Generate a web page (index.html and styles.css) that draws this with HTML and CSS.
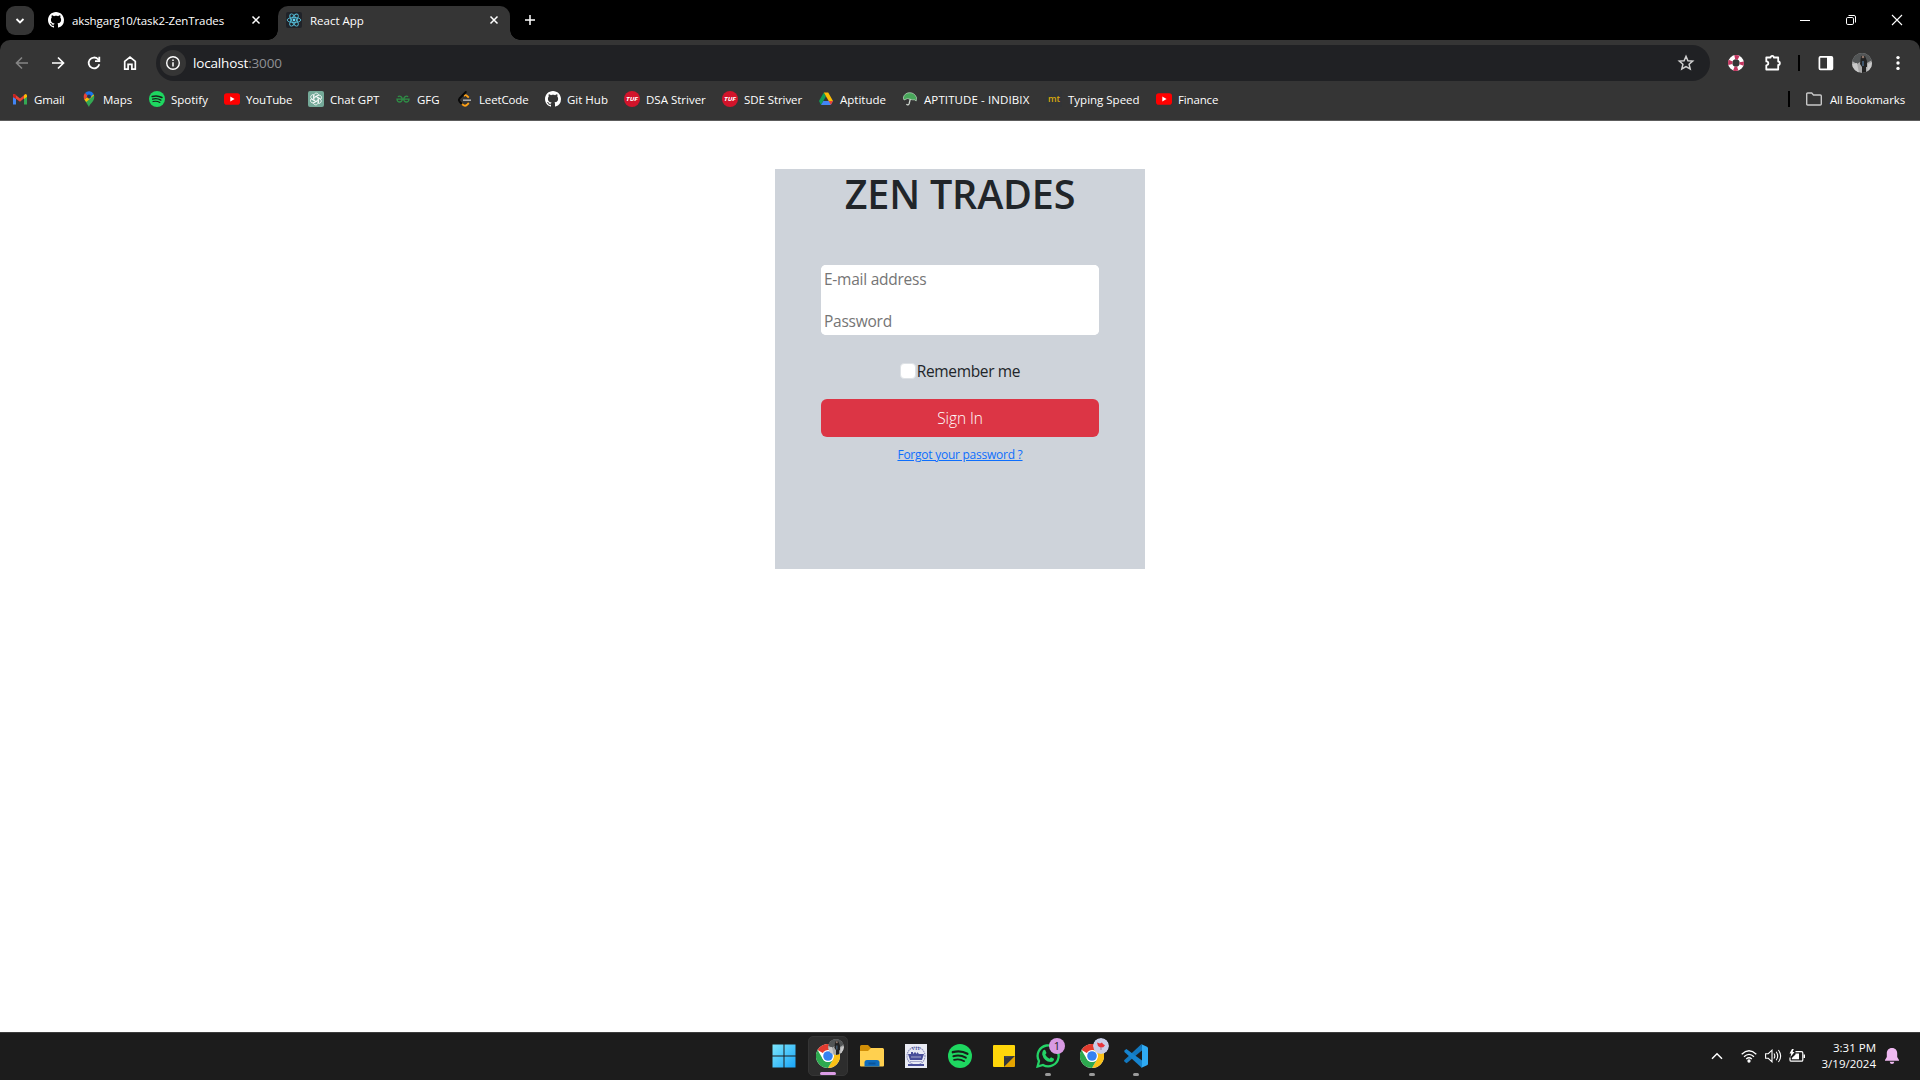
FILE: index.html
```html
<!DOCTYPE html>
<html lang="en">
<head>
<meta charset="utf-8">
<title>React App</title>
<link rel="stylesheet" href="styles.css">
</head>
<body>
<svg class="defs" width="0" height="0" aria-hidden="true">
  <symbol id="github" viewBox="0 0 16 16"><path fill="#fff" d="M8 0C3.58 0 0 3.58 0 8c0 3.54 2.29 6.53 5.47 7.59.4.07.55-.17.55-.38 0-.19-.01-.82-.01-1.49-2.01.37-2.53-.49-2.69-.94-.09-.23-.48-.94-.82-1.13-.28-.15-.68-.52-.01-.53.63-.01 1.08.58 1.23.82.72 1.21 1.87.87 2.33.66.07-.52.28-.87.51-1.07-1.78-.2-3.64-.89-3.64-3.95 0-.87.31-1.59.82-2.15-.08-.2-.36-1.02.08-2.12 0 0 .67-.21 2.2.82.64-.18 1.32-.27 2-.27s1.36.09 2 .27c1.53-1.04 2.2-.82 2.2-.82.44 1.1.16 1.92.08 2.12.51.56.82 1.27.82 2.15 0 3.07-1.87 3.75-3.65 3.95.29.25.54.73.54 1.48 0 1.07-.01 1.93-.01 2.2 0 .21.15.46.55.38A8.01 8.01 0 0 0 16 8c0-4.42-3.58-8-8-8z"/></symbol>
  <symbol id="spotify" viewBox="0 0 24 24"><circle cx="12" cy="12" r="12" fill="#1ed760"/><g fill="none" stroke="#17201a" stroke-linecap="round"><path stroke-width="2.3" d="M4.800 8.200c5-1.400 10.300-.9 14.600 1.600"/><path stroke-width="2" d="M5.400 12.200c4.300-1.200 8.700-.700 12.400 1.500"/><path stroke-width="1.600" d="M6 15.900c3.600-.9 7.200-.5 10.300 1.300"/></g></symbol>
  <symbol id="youtube" viewBox="0 0 16 16"><rect y="2.300" width="16" height="11.400" rx="2.800" fill="#f00"/><path fill="#fff" d="M6.300 5.500v5L10.600 8z"/></symbol>
  <symbol id="chrome" viewBox="0 0 24 24"><circle cx="12" cy="12" r="12" fill="#fff"/><path fill="#e33b2e" d="M12 12 1.600 6A12 12 0 0 1 22.400 6H12z"/><path fill="#fbc116" d="M12 6h10.400A12 12 0 0 1 12 24l5.200-9z"/><path fill="#2da94f" d="M1.600 6 6.800 15a6 6 0 0 0 10.400 0L12 24A12 12 0 0 1 1.600 6z"/><circle cx="12" cy="12" r="6" fill="#fff"/><circle cx="12" cy="12" r="4.800" fill="#3582f0"/></symbol>
  <symbol id="photo" viewBox="0 0 20 20"><clipPath id="round"><circle cx="10" cy="10" r="10"/></clipPath><g clip-path="url(#round)"><path fill="#a9a9a9" d="M0 0h20v20H0z"/><path fill="#525556" d="M0 0h20v7l-5 3-2-3-5 2-3 2-5-3z"/><path fill="#222" d="M9 3h4l2 5v6h-1v6h-4v-6L8 11z"/><path fill="#c9c9c9" d="M0 11l5-1 2 10H0zM16 11l4-2v11h-5z"/><circle cx="11" cy="4" r="1.300" fill="#8c7469"/><path fill="#40566b" d="M10 8h2v5h-2z"/></g></symbol>
  <symbol id="close" viewBox="0 0 10 10"><path d="m1.500 1.500 7 7m0-7-7 7" stroke="#fff" stroke-width="1.500"/></symbol>
</svg>

<header class="browser">
  <div class="tabstrip">
    <button class="tab-search"><svg width="10" height="10" viewBox="0 0 10 10"><path d="m1.500 3 3.500 3.500L8.500 3" fill="none" stroke="#fff" stroke-width="1.800"/></svg></button>
    <div class="tab"><svg width="16" height="16"><use href="#github"/></svg><span class="tab-title t-github">akshgarg10/task2-ZenTrades</span><svg width="10" height="10"><use href="#close"/></svg></div>
    <div class="tab active">
      <svg width="16" height="16" viewBox="0 0 16 16"><rect width="16" height="16" rx="2" fill="#202329"/><g fill="none" stroke="#55bdd8" stroke-width=".9"><ellipse cx="8" cy="8" rx="6.800" ry="2.600"/><ellipse cx="8" cy="8" rx="6.800" ry="2.600" transform="rotate(60 8 8)"/><ellipse cx="8" cy="8" rx="6.800" ry="2.600" transform="rotate(120 8 8)"/></g><circle cx="8" cy="8" r="1.400" fill="#61dafb"/></svg>
      <span class="tab-title">React App</span><svg width="10" height="10"><use href="#close"/></svg></div>
    <svg class="new-tab" width="12" height="12" viewBox="0 0 12 12"><path d="M6 1v10M1 6h10" stroke="#fff" stroke-width="1.500"/></svg>
    <div class="window-controls">
      <svg width="12" height="12" viewBox="0 0 12 12"><path d="M1 6.500h10" stroke="#fff"/></svg>
      <svg width="12" height="12" viewBox="0 0 12 12" fill="none" stroke="#fff"><rect x="1.500" y="3.500" width="7" height="7" rx="1.300"/><path d="M3.500 1.500H9A1.500 1.500 0 0 1 10.500 3v5.500"/></svg>
      <svg width="12" height="12" viewBox="0 0 12 12"><path d="m1 1 10 10M11 1 1 11" stroke="#fff" stroke-width="1.100"/></svg>
    </div>
  </div>
  <div class="chrome-panel">
    <div class="toolbar">
      <svg width="16" height="16" viewBox="0 0 16 16" fill="none" stroke="#858585" stroke-width="1.600"><path d="M14 8H3m5-5.500L2.500 8 8 13.500"/></svg>
      <svg width="16" height="16" viewBox="0 0 16 16" fill="none" stroke="#fff" stroke-width="1.700"><path d="M2 8h11M8 2.500 13.500 8 8 13.500"/></svg>
      <svg width="16" height="16" viewBox="0 0 16 16" fill="none" stroke="#fff" stroke-width="1.800"><path d="M13.300 9.300A5.400 5.400 0 1 1 12 4.200L13 5.300"/><path d="M13.300 1.800v4.300H9"/></svg>
      <svg width="16" height="16" viewBox="0 0 16 16" fill="none" stroke="#fff" stroke-width="1.700"><path d="M2.700 14.200V6.400L8 2l5.300 4.400v7.800h-3.400V9.400H6.100v4.800z"/></svg>
      <div class="omnibox">
        <span class="site-info"><svg width="16" height="16" viewBox="0 0 16 16"><circle cx="8" cy="8" r="6.300" fill="none" stroke="#fff" stroke-width="1.400"/><path d="M8 7.200v4.200M8 4.500v1.600" stroke="#fff" stroke-width="1.500"/></svg></span>
        <span class="url">localhost<span class="port">:3000</span></span>
        <svg width="18" height="18" viewBox="0 0 18 18"><path d="m9 2.300 1.900 4.400 4.800.4-3.600 3.200 1.100 4.700L9 12.500 4.800 15l1.100-4.700-3.600-3.200 4.800-.4z" fill="none" stroke="#d0d0d0" stroke-width="1.500"/></svg>
      </div>
      <div class="toolbar-end">
        <svg width="16" height="16" viewBox="0 0 16 16"><circle cx="8" cy="8" r="5.800" fill="none" stroke="#fff" stroke-width="4.300"/><circle cx="8" cy="8" r="5.800" fill="none" stroke="#c43660" stroke-width="4.300" stroke-dasharray="4 5.110" stroke-dashoffset="2"/></svg>
        <svg class="extensions" width="18" height="18" viewBox="0 0 18 18"><path d="M2.300 3.500h4.300a1.600 1.600 0 0 1 3.200 0h4.400v4a1.600 1.600 0 0 1 0 3.300v4.700H2.300v-4.200c2.700-.2 2.700-3.700 0-3.900z" fill="none" stroke="#fff" stroke-width="1.800" stroke-linejoin="round"/></svg>
        <i class="divider"></i>
        <svg class="side-panel" width="16" height="16" viewBox="0 0 16 16"><rect x="1.400" y="1.900" width="13" height="12.400" rx="1" fill="none" stroke="#fff" stroke-width="1.700"/><path d="M9 2h5.500v12H9z" fill="#fff"/></svg>
        <svg class="profile" width="20" height="20"><use href="#photo"/></svg>
        <svg width="4" height="16" viewBox="0 0 4 16" fill="#fff"><circle cx="2" cy="2.600" r="1.700"/><circle cx="2" cy="8" r="1.700"/><circle cx="2" cy="13.400" r="1.700"/></svg>
      </div>
    </div>
    <nav class="bookmarks">
      <a class="bm"><svg width="16" height="16" viewBox="0 0 16 16"><path fill="#4285f4" d="M1 6v7.500h3V7z"/><path fill="#34a853" d="M12 7v6.500h3V6z"/><path fill="#ea4335" d="M1 3.500 2.500 3 8 7.500 13.500 3v3L8 10.800 1 5.500z"/><path fill="#fbbc04" d="M12 4.200 13.500 3q1.500 0 1.500 1.500V6l-3 2z"/><path fill="#c5221f" d="M1 6V4.500Q1 3 2.500 3L4 4.200V8z"/></svg><span class="s-gmail">Gmail</span></a>
      <a class="bm"><svg width="16" height="16" viewBox="0 0 16 16"><path fill="#34a853" d="M3 8 8 16c1-3.500 5.300-5.300 5.300-10.200L12.700 3z"/><path fill="#fbbc04" d="m3.400 8.600 7-6.200 2.700 1.900L5.200 11z"/><path fill="#1a73e8" d="M4 2.100A5.300 5.300 0 0 1 12.600 3L8.500 7.800z"/><path fill="#ea4335" d="M4 2 7 5 3.400 8.800C2.300 6.200 2.500 3.800 4 2z"/><circle cx="8" cy="5.500" r="2" fill="#293650"/></svg><span>Maps</span></a>
      <a class="bm"><svg width="16" height="16"><use href="#spotify"/></svg><span>Spotify</span></a>
      <a class="bm"><svg width="16" height="16"><use href="#youtube"/></svg><span class="s-youtube">YouTube</span></a>
      <a class="bm"><svg width="16" height="16" viewBox="0 0 16 16"><rect width="16" height="16" rx="2" fill="#74a998"/><g fill="none" stroke="#fff" stroke-width=".8"><path id="petal" d="M6 8.800V4.500c0-3 4-3 4.500-.7L6.800 6"/><use href="#petal" transform="rotate(60 8 8)"/><use href="#petal" transform="rotate(120 8 8)"/><use href="#petal" transform="rotate(180 8 8)"/><use href="#petal" transform="rotate(240 8 8)"/><use href="#petal" transform="rotate(300 8 8)"/></g></svg><span>Chat GPT</span></a>
      <a class="bm"><svg width="16" height="16" viewBox="0 0 16 16" fill="none" stroke="#2f8d46" stroke-width="1.300"><path d="M2.800 5.700C5 4.500 7.200 5.700 7.200 8.300 7.200 11.900 2.300 11.900 2 8.200h12c-.3 3.700-5.200 3.700-5.200.1 0-2.600 2.200-3.800 4.400-2.600"/></svg><span>GFG</span></a>
      <a class="bm"><svg width="16" height="16" viewBox="0 0 16 16" fill="none" stroke-width="1.900"><path stroke="#ffa116" d="m6.800 4.800 1.200-.6q1-.3 1.800.5l2 1.900M4.500 12.400l1.200 1.200q2.200 2.200 4.300.2l1.800-1.800"/><path stroke="#090909" stroke-linecap="round" d="M8.800 1 2.500 7.500Q1.300 9 2.500 10.500l2 2"/><path stroke="#b3b3b3" stroke-width="1.500" d="M6 9.200h8"/></svg><span class="s-leet">LeetCode</span></a>
      <a class="bm"><svg width="16" height="16"><use href="#github"/></svg><span>Git Hub</span></a>
      <a class="bm"><svg width="16" height="16" viewBox="0 0 16 16"><circle cx="8" cy="8" r="8" fill="#d2142b"/><text x="8" y="9.800" text-anchor="middle" textLength="12" lengthAdjust="spacingAndGlyphs" class="tuf-text">TUF</text></svg><span>DSA Striver</span></a>
      <a class="bm"><svg width="16" height="16" viewBox="0 0 16 16"><circle cx="8" cy="8" r="8" fill="#d2142b"/><text x="8" y="9.800" text-anchor="middle" textLength="12" lengthAdjust="spacingAndGlyphs" class="tuf-text">TUF</text></svg><span class="s-sde">SDE Striver</span></a>
      <a class="bm"><svg width="16" height="16" viewBox="0 0 16 16"><path fill="#0f9d58" d="M5.800 1.500 1 10l2 4L8 5.200z"/><path fill="#fbbc04" d="M5.800 1.500h4.400L15 10h-4.300z"/><path fill="#4285f4" d="M3 14 5.300 10H15l-2.300 4z"/><path fill="#ea4335" d="M10.700 10H15l-2.200 4z"/></svg><span>Aptitude</span></a>
      <a class="bm"><svg width="16" height="16" viewBox="0 0 16 16"><path d="m8.500 7-1.300 5.500q-1 2.300-2.800.8" fill="none" stroke="#cfd6cf" stroke-width="1.300"/><path d="M1.300 7C2 .5 12-.5 14.500 6.500l-.3 3.500q-1.500-1.700-4-1.200L5.500 7.500 2 9z" fill="#48a75a" stroke="#d4ead6" stroke-width=".6"/></svg><span class="s-indibix">APTITUDE - INDIBIX</span></a>
      <a class="bm"><svg width="16" height="16" viewBox="0 0 16 16"><rect width="16" height="16" rx="2" fill="#323437"/><text x="8" y="11" text-anchor="middle" class="mt-text">mt</text></svg><span>Typing Speed</span></a>
      <a class="bm"><svg width="16" height="16"><use href="#youtube"/></svg><span class="s-finance">Finance</span></a>
      <div class="all-bookmarks"><i class="divider"></i><svg width="18" height="16" viewBox="0 0 18 16"><path d="M1.700 13V3q0-1 1-1h4L8.500 4h6.800q1 0 1 1v8q0 1-1 1H2.700q-1 0-1-1z" fill="none" stroke="#c7c7c7" stroke-width="1.400"/></svg><span class="s-all">All Bookmarks</span></div>
    </nav>
  </div>
</header>

<main class="page">
  <form class="login">
    <h1>ZEN TRADES</h1>
    <div class="fields">
      <input type="text" placeholder="E-mail address">
      <input type="password" placeholder="Password">
    </div>
    <label class="remember"><input type="checkbox"><span>Remember me</span></label>
    <button class="sign-in" type="button"><span>Sign In</span></button>
    <a class="forgot" href="#">Forgot your password ?</a>
  </form>
</main>

<footer class="taskbar">
  <div class="apps">
    <div class="app"><svg width="24" height="24" viewBox="0 0 24 24"><defs><linearGradient id="win" x2="1" y2="1" gradientUnits="objectBoundingBox"><stop stop-color="#7ce6fb"/><stop offset="1" stop-color="#18a4f8"/></linearGradient></defs><path fill="url(#win)" d="M.5.500h11v11H.5zm12 0h11v11h-11zm-12 12h11v11H.5zm12 0h11v11h-11z"/></svg></div>
    <div class="app current"><svg width="24" height="24"><use href="#chrome"/></svg><svg class="badge" width="16" height="16"><use href="#photo"/></svg></div>
    <div class="app"><svg width="24" height="24" viewBox="0 0 24 24"><path fill="#d18e07" d="M0 2.500Q0 1 1.500 1H8l3 3h12v7H0z"/><path fill="#ffd04f" d="M0 7h8l3-3h11.500Q24 4 24 5.500v16q0 1-1 1H1q-1 0-1-1z"/><path fill="#0e6cbd" d="M4.500 22.500v-4q0-2.500 2.500-2.500h10q2.500 0 2.500 2.500v4z"/><path fill="#0a559a" d="M8.500 18.500h7v2h-7z"/></svg></div>
    <div class="app"><svg width="22" height="24" viewBox="0 0 22 24"><path fill="#e9ebf4" d="M0 0h22v24H0z"/><circle cx="11" cy="12" r="9" fill="none" stroke="#8d91bf" stroke-width="1.200" stroke-dasharray="1.500 .7"/><path fill="#484e99" d="M3 10h3V8h2v2l2-2 2 2V8l2 2h5l-2 6H5zM3 20h16v2H3z"/><path stroke="#a7aacd" d="M5 17.500h12M6 13h10"/><text x="11" y="5.800" text-anchor="middle" class="vit-text">VIT</text></svg></div>
    <div class="app"><svg width="24" height="24"><use href="#spotify"/></svg></div>
    <div class="app"><svg width="22" height="22" viewBox="0 0 22 22"><path fill="#ffd60a" d="M1 0h20q1 0 1 1v10L11 22H1q-1 0-1-1V1q0-1 1-1z"/><path fill="#33363c" d="M11 11h11L11 22z"/><path fill="#44474d" d="M11 11h11l-9 2z"/><path fill="#e5a400" d="M22 11v10q0 1-1 1H11z"/></svg></div>
    <div class="app running"><svg width="24" height="24" viewBox="0 0 24 24"><path d="M1.600 22.500 3 17a10.500 10.500 0 1 1 4 4z" fill="none" stroke="#24d366" stroke-width="2.300"/><path fill="#24d366" d="M7 6.800q1-1.500 2.200-.7l1.300 3-1.200 1.700q1.500 2.800 4.200 3.900l1.500-1.500 3 1.500q.2 3-3.200 3.400Q8 17.500 6.200 10.500q-.1-2.200.8-3.700z"/></svg><span class="badge count">1</span></div>
    <div class="app running"><svg width="24" height="24"><use href="#chrome"/></svg><svg class="badge" width="16" height="16" viewBox="0 0 16 16"><circle cx="8" cy="8" r="8" fill="#c9cde9"/><path fill="#e8343c" d="m4 4.500 3 1 2-1 1 1.500 2 1.200-1.700 2-3 .3-2.300-1.500z"/><path stroke="#8c6070" stroke-width=".7" d="M8 9.500v2.500"/></svg></div>
    <div class="app running"><svg width="24" height="24" viewBox="0 0 24 24"><path fill="#1278bf" d="m17.500 0 1 6L3.500 18.500 2.400 19.200.4 17.500q-.7-.7 0-1.500z"/><path fill="#1684cf" d="M.4 8 .4 6.500 2.400 5 18 16.500v7.500z"/><path fill="#2fabf4" d="m17 0 6 2.700q1 .5 1 1.500v15.600q0 1-1 1.500L17 24q1 0 1-2V2q0-2-1-2z"/></svg></div>
  </div>
  <div class="tray">
    <svg width="12" height="8" viewBox="0 0 12 8"><path d="m1 6.800 5-5 5 5" fill="none" stroke="#fff" stroke-width="1.500"/></svg>
    <svg width="16" height="14" viewBox="0 0 16 14" fill="none" stroke="#fff" stroke-width="1.300"><path d="M.7 5.200q7.300-7 14.600 0M3 7.700q5-4.700 10 0M5.200 10q2.800-2.500 5.600 0"/><circle cx="8" cy="12" r="1" fill="#fff"/></svg>
    <svg width="17" height="14" viewBox="0 0 17 14" fill="none" stroke="#fff" stroke-width="1.100"><path d="M.6 4.700h2.700L7 1.200v11.600L3.300 9.300H.6zM9 4.500q1.600 2.500 0 5M11.200 2.700q3 4.300 0 8.600M13.400 1q4.500 6 0 12"/></svg>
    <svg width="17" height="14" viewBox="0 0 17 14"><path d="M6.500 2.600h6q1.300 0 1.300 1.300v7q0 1.300-1.300 1.300H2.300Q1 12.200 1 10.900V8.500" fill="none" stroke="#fff" stroke-width="1.200"/><path fill="#fff" d="M6.500 4.500H10v5.800H2.900V9L6.500 5.500zM14.500 5.500H16v3.500h-1.500zM3 0 .5 4.500h1.700L1.500 8 5.500 3H3.600L4.800 0z"/></svg>
    <div class="clock"><span>3:31 PM</span><span>3/19/2024</span></div>
    <svg width="14" height="16" viewBox="0 0 14 16"><path fill="#efb9f1" d="M7 0c3.500 0 5.200 2.500 5.200 5.300V9L14 12v.8H0V12l1.800-3V5.300C1.800 2.500 3.500 0 7 0zM4.700 13.800h4.600Q9 16 7 16t-2.300-2.200z"/></svg>
  </div>
</footer>
</body>
</html>
```
FILE: styles.css
```css
* { box-sizing: border-box; }
body {
  margin: 0;
  height: 1080px;
  display: flex;
  flex-direction: column;
  overflow: hidden;
  background: #fff;
  font-family: "Open Sans", "Noto Sans", sans-serif;
  font-size: 12px;
}
svg { display: block; flex: none; }
.defs { position: absolute; }
span { white-space: nowrap; }

/* Browser chrome */
.browser { height: 121px; background: #000; color: #fff; flex: none; }
.tabstrip { height: 40px; display: flex; align-items: flex-start; padding: 6px 17px 0 6px; }
.tab-search {
  width: 28px; height: 29px; border: 0; border-radius: 9px; background: #353535;
  padding: 0; display: grid; place-items: center;
}
.tab { display: flex; align-items: center; width: 244px; height: 28px; padding: 0 17px 0 14px; }
.tab-title { flex: 1; margin-left: 8px; }
.t-github { letter-spacing: -.1px; }
.tab.active {
  position: relative; width: 232px; height: 34px; padding: 0 11px 6px 8px;
  background: #353535; border-radius: 10px 10px 0 0;
}
.tab.active::before, .tab.active::after {
  content: ""; position: absolute; bottom: 0; width: 10px; height: 10px;
}
.tab.active::before { left: -10px; background: radial-gradient(circle at 0 0, transparent 9.500px, #353535 10px); }
.tab.active::after { right: -10px; background: radial-gradient(circle at 100% 0, transparent 9.500px, #353535 10px); }
.new-tab { margin: 8px 0 0 14px; }
.window-controls { display: flex; gap: 34px; margin: 8px 0 0 auto; }

.chrome-panel { height: 81px; background: #353535; border-radius: 10px 10px 0 0; border-bottom: 1px solid #5c5c5c; }
.toolbar { height: 46px; display: flex; align-items: center; gap: 20px; padding: 0 20px 0 14px; }
.omnibox {
  flex: none; width: 1554px; height: 36px; margin-left: -2px; border-radius: 18px; background: #202124;
  display: flex; align-items: center; padding: 0 15px 0 4px; gap: 7px;
}
.site-info { width: 26px; height: 26px; border-radius: 50%; background: #353535; display: grid; place-items: center; }
.url { flex: 1; font-size: 13.500px; letter-spacing: -.16px; }
.port { color: #8f9094; }
.toolbar-end { flex: 1; display: flex; align-items: center; margin-left: -2px; }
.extensions { margin: 0 16px 0 20px; }
.divider { width: 2px; height: 16px; background: #000; }
.side-panel { margin-left: 18px; }
.profile { margin: 0 auto 0 18px; }

.bookmarks {
  height: 28px; display: grid; align-items: center; padding: 0 15px 2px 12px;
  grid-template-columns: 69px 68px 75px 84px 87px 62px 88px 79px 98px 96px 84px 144px 110px 100px 1fr;
}
.bookmarks span, .tab-title { font-size: 11.500px; }
.bm { display: flex; align-items: center; gap: 6px; }
.bm .s-gmail, .bm .s-youtube, .bm .s-leet, .bm .s-finance { letter-spacing: -.15px; }
.bm .s-sde { letter-spacing: -.08px; }
.bm .s-indibix { letter-spacing: .1px; }
.all-bookmarks { display: flex; align-items: center; justify-content: flex-end; }
.all-bookmarks svg { margin: 0 7px 0 15px; }
.s-all { letter-spacing: -.12px; }
.tuf-text { font: italic 700 4.800px "Open Sans", sans-serif; fill: #fff; }
.mt-text { font: 600 9px "Open Sans", sans-serif; fill: #d6a80c; }
.vit-text { font: 700 5px "Liberation Serif", serif; fill: #484e99; }

/* Page */
.page { flex: 1; display: flex; justify-content: center; align-items: flex-start; padding-top: 48px; }
.login {
  width: 370px; height: 400px; padding: 0 46px; background: #ced3da; color: #212529;
  display: flex; flex-direction: column; align-items: center; font-size: 15.500px; letter-spacing: -.25px;
}
h1 { margin: 0 0 48px; font-size: 39.500px; line-height: 51px; height: 48px; font-weight: 600; white-space: nowrap; letter-spacing: -.2px; }
.fields { width: 278px; height: 70px; background: #fff; border-radius: 5px; overflow: hidden; display: flex; flex-direction: column; justify-content: space-between; }
.fields input { width: 100%; height: 28px; border: 0; background: #fff; padding: 0 3px; font: inherit; letter-spacing: inherit; color: #212529; outline: 0; }
::placeholder { color: #757575; opacity: 1; }
.remember { display: flex; align-items: center; gap: 1px; height: 24px; margin: 24px 0 16px; }
.remember span { letter-spacing: -.35px; }
.remember input { appearance: none; width: 16px; height: 16px; margin: 0; background: #fff; border: 1px solid #dee2e6; border-radius: 4px; }
.sign-in { width: 278px; height: 38px; flex: none; border: 0; border-radius: 6px; background: #dc3545; color: #fff; font: inherit; font-weight: 300; letter-spacing: -.1px; padding: 0; }
.forgot { margin-top: 9px; font-size: 12px; line-height: 18px; color: #0d6efd; text-decoration: underline; white-space: nowrap; }

/* Taskbar */
.taskbar {
  height: 48px; flex: none; background: #1c1c1c; border-top: 1px solid #3c3c3c; color: #fff;
  display: grid; grid-template-columns: 1fr auto 1fr;
}
.apps { grid-column: 2; display: flex; gap: 4px; align-items: center; padding-bottom: 1px; }
.app { position: relative; width: 40px; height: 40px; display: grid; place-items: center; }
.current { background: #2d2d2d; border: 1px solid #353535; border-radius: 5px; }
.badge { position: absolute; right: 3px; top: 2px; border-radius: 50%; }
.count { width: 16px; height: 16px; background: #d99ae3; color: #222; font-size: 11px; line-height: 16px; text-align: center; }
.current::after, .running::after { content: ""; position: absolute; bottom: 0; left: 50%; width: 6px; height: 3px; margin-left: -3px; border-radius: 2px; background: #9a9a9a; }
.current::after { width: 16px; margin-left: -8px; background: #dc9de6; }
.tray { display: flex; align-items: center; justify-content: flex-end; padding: 0 21px 2px 0; }
.tray > svg:nth-child(1) { margin-right: 18px; }
.tray > svg:nth-child(2) { margin-right: 8px; }
.tray > svg:nth-child(3) { margin-right: 7px; }
.clock { display: flex; flex-direction: column; align-items: flex-end; line-height: 16px; font-size: 11.500px; margin: 0 9px 0 16px; }
```
